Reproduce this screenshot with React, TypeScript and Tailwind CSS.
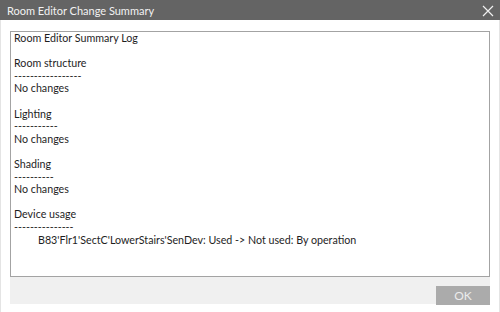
const lines = [
  "Room Editor Summary Log",
  "",
  "Room structure",
  "-----------------",
  "No changes",
  "",
  "Lighting",
  "-----------",
  "No changes",
  "",
  "Shading",
  "----------",
  "No changes",
  "",
  "Device usage",
  "---------------",
];

export default function App() {
  return (
    <div className="w-[500px] h-[312px] bg-white flex flex-col font-['Lato',sans-serif] overflow-hidden">
      {/* title bar */}
      <div className="h-[20px] bg-[#646464] flex items-center justify-between pl-[7px] pr-[6px]">
        <span className="text-[11px] text-[#f2f2f2] leading-none">Room Editor Change Summary</span>
        <svg width="12" height="12" viewBox="0 0 12 12" className="mt-[1px]">
          <path d="M1 1 L11 11 M11 1 L1 11" stroke="#f0f0f0" strokeWidth="1.2" />
        </svg>
      </div>

      <div className="flex-1 flex flex-col px-[9px] pt-[11px] border-l border-r border-[#e4e4e4]">
        <div className="h-[246px] border border-[#a3a3a3] px-[3px] text-[10.7px] leading-[12.6px] text-[#1e1e1e] whitespace-pre">
          {lines.map((l, i) => (
            <div key={i} className="h-[12.6px]">{l}</div>
          ))}
          <div className="h-[12.6px] pl-[24px]">B83'Flr1'SectC'LowerStairs'SenDev: Used -&gt; Not used: By operation</div>
        </div>
        <div className="h-[27px] bg-[#f0f0f0] flex justify-end items-end">
          <button className="w-[54px] h-[19px] bg-[#ababab] text-[#ececec] text-[12px] leading-none -mb-[1px]">OK</button>
        </div>
      </div>
    </div>
  );
}
